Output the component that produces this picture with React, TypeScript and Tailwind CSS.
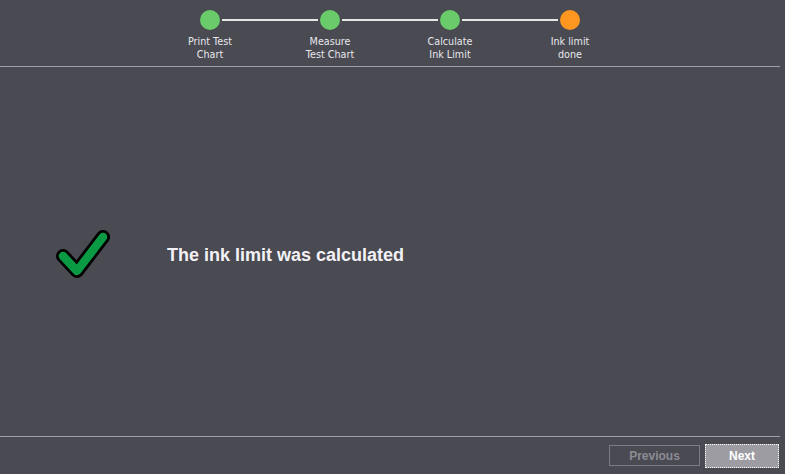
import React from "react";

const steps = [
  { l1: "Print Test", l2: "Chart", color: "bg-[#6acb6a]" },
  { l1: "Measure", l2: "Test Chart", color: "bg-[#6acb6a]" },
  { l1: "Calculate", l2: "Ink Limit", color: "bg-[#6acb6a]" },
  { l1: "Ink limit", l2: "done", color: "bg-[#ff9620]" },
];

export default function App() {
  return (
    <div className="w-[785px] h-[474px] bg-[#4a4a52] flex flex-col overflow-hidden" style={{ fontFamily: "'Liberation Sans', Arial, sans-serif" }}>
      <div className="w-[780px] h-[66px] flex justify-center pt-[10px]">
        <div className="flex items-start">
          {steps.map((s, i) => (
            <React.Fragment key={i}>
              <div className="relative w-[20px] h-[20px] flex justify-center">
                <div className={`w-[20px] h-[20px] rounded-full ${s.color}`} />
                <div className="absolute top-[25px] w-[80px] text-center text-[9.6px] leading-[13px] text-[#e8e8ec]" style={{ fontFamily: "'DejaVu Sans', sans-serif" }}>
                  <div>{s.l1}</div>
                  <div>{s.l2}</div>
                </div>
              </div>
              {i < steps.length - 1 && (
                <div className="w-[100px] h-[20px] flex items-center px-[2px]">
                  <div className="w-full h-[2px] bg-[#e6e6e6]" />
                </div>
              )}
            </React.Fragment>
          ))}
        </div>
      </div>
      <div className="w-[780px] h-[1px] bg-[#a0a0a8]" />
      <div className="flex-1 flex items-center pl-[56px] pt-[7px]">
        <svg width="54" height="54" viewBox="0 0 54 54" className="shrink-0 -mt-[3px]">
          <path d="M7 29 L21 44 L47 10" fill="none" stroke="#000" strokeWidth="14" strokeLinecap="round" strokeLinejoin="round" />
          <path d="M7 29 L21 44 L47 10" fill="none" stroke="#0a9a44" strokeWidth="8.5" strokeLinecap="round" strokeLinejoin="round" />
        </svg>
        <div className="ml-[57px] text-[18px] font-bold text-[#f2f2f6]">The ink limit was calculated</div>
      </div>
      <div className="w-[780px] h-[1px] bg-[#a0a0a8]" />
      <div className="h-[37px] flex justify-end items-center pr-[6px] gap-[5px]">
        <div className="w-[91px] h-[21px] border border-[#7c7c84] flex items-center justify-center text-[12px] font-bold text-[#8c8c94]">Previous</div>
        <div className="w-[74px] h-[24px] bg-[#9c9ca2] border border-dotted border-white flex items-center justify-center text-[12px] font-bold text-white">Next</div>
      </div>
    </div>
  );
}
